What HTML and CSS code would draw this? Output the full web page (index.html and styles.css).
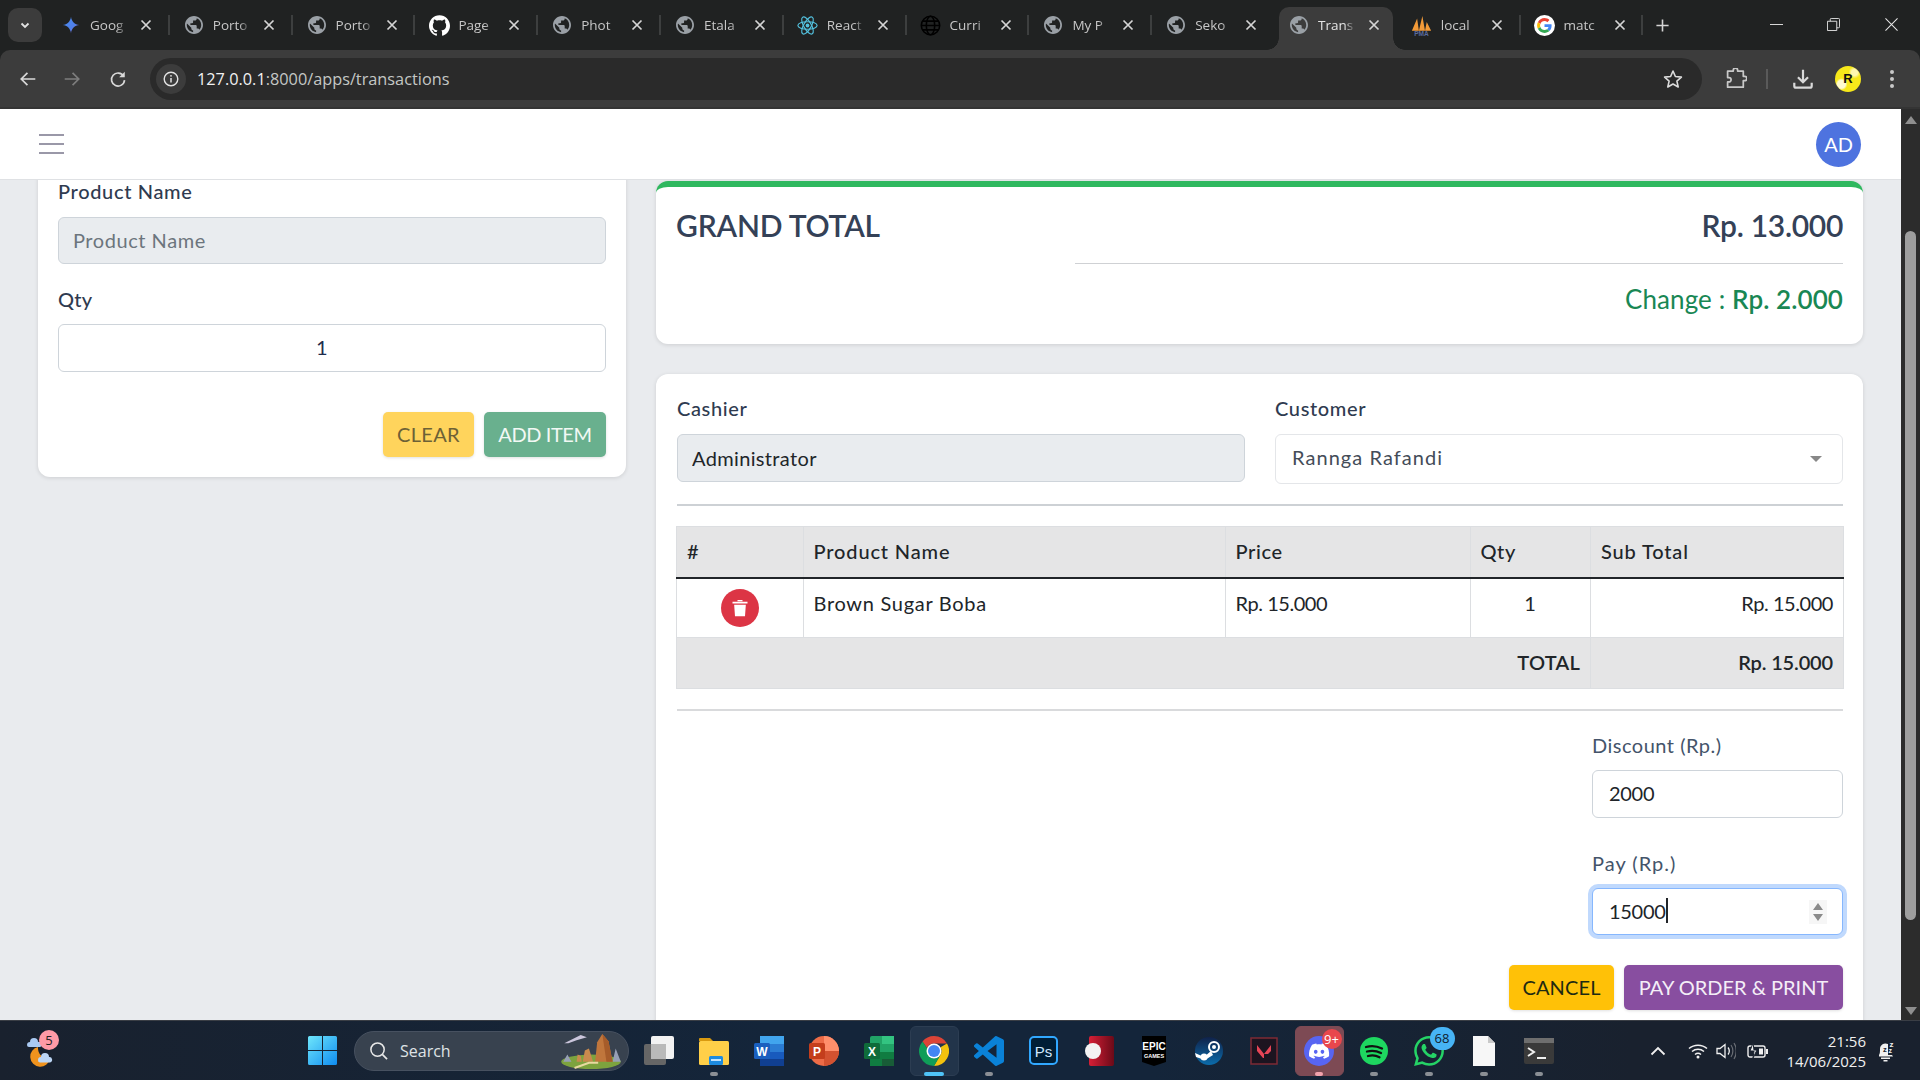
FILE: index.html
```html
<!DOCTYPE html>
<html lang="en">
<head>
<meta charset="utf-8">
<title>Transactions</title>
<link rel="stylesheet" href="styles.css">
</head>
<body>
<svg class="defs" aria-hidden="true">
  <defs>
    <linearGradient id="gem" x1="0" y1="0" x2="1" y2="1"><stop offset="0" stop-color="#4a90f5"/><stop offset=".6" stop-color="#4f7fe8"/><stop offset="1" stop-color="#a574dc"/></linearGradient>
    <linearGradient id="win" x1="0" y1="0" x2="1" y2="1"><stop offset="0" stop-color="#6fe6fb"/><stop offset="1" stop-color="#0f8cf0"/></linearGradient>
    <linearGradient id="red" x1="0" y1="0" x2="1" y2="0"><stop offset="0" stop-color="#d61f36"/><stop offset="1" stop-color="#6b0a18"/></linearGradient>
    <linearGradient id="steam" x1="0" y1="0" x2="0" y2="1"><stop offset="0" stop-color="#10224a"/><stop offset="1" stop-color="#0b6cab"/></linearGradient>
    <symbol id="gemini" viewBox="0 0 24 24"><path fill="url(#gem)" d="M12 1c.6 6 5 10.400 11 11-6 .6-10.400 5-11 11-.6-6-5-10.400-11-11 6-.6 10.400-5 11-11z"/></symbol>
    <symbol id="globe" viewBox="2 2 20 20"><path fill="#9aa0a6" d="M12 2C6.480 2 2 6.480 2 12s4.480 10 10 10 10-4.480 10-10S17.520 2 12 2zm-1 17.930c-3.950-.490-7-3.850-7-7.930 0-.620.080-1.210.210-1.790L9 15v1c0 1.100.900 2 2 2v1.930zm6.900-2.540c-.260-.810-1-1.390-1.900-1.390h-1v-3c0-.550-.450-1-1-1H8v-2h2c.550 0 1-.450 1-1V7h2c1.100 0 2-.900 2-2v-.410c2.930 1.190 5 4.060 5 7.410 0 2.080-.800 3.970-2.100 5.390z"/></symbol>
    <symbol id="github" viewBox="0 0 24 24"><path fill="#fff" d="M12 .297c-6.630 0-12 5.373-12 12 0 5.303 3.438 9.800 8.205 11.385.600.113.820-.258.820-.577 0-.285-.010-1.040-.015-2.040-3.338.724-4.042-1.610-4.042-1.610C4.422 18.070 3.633 17.700 3.633 17.700c-1.087-.744.084-.729.084-.729 1.205.084 1.838 1.236 1.838 1.236 1.070 1.835 2.809 1.305 3.495.998.108-.776.417-1.305.760-1.605-2.665-.300-5.466-1.332-5.466-5.930 0-1.310.465-2.380 1.235-3.220-.135-.303-.540-1.523.105-3.176 0 0 1.005-.322 3.300 1.230.960-.267 1.980-.399 3-.405 1.020.006 2.040.138 3 .405 2.280-1.552 3.285-1.230 3.285-1.230.645 1.653.240 2.873.120 3.176.765.840 1.230 1.910 1.230 3.220 0 4.610-2.805 5.625-5.475 5.920.420.360.810 1.096.810 2.220 0 1.606-.015 2.896-.015 3.286 0 .315.210.690.825.570C20.565 22.092 24 17.592 24 12.297c0-6.627-5.373-12-12-12"/></symbol>
    <symbol id="react" viewBox="0 0 24 24"><g fill="none" stroke="#53c1de" stroke-width="1.300"><ellipse cx="12" cy="12" rx="11" ry="4.300"/><ellipse cx="12" cy="12" rx="11" ry="4.300" transform="rotate(60 12 12)"/><ellipse cx="12" cy="12" rx="11" ry="4.300" transform="rotate(120 12 12)"/></g><circle cx="12" cy="12" r="2.200" fill="#53c1de"/></symbol>
    <symbol id="wire" viewBox="0 0 24 24"><g fill="none" stroke="#000" stroke-width="1.800"><circle cx="12" cy="12" r="10.500"/><ellipse cx="12" cy="12" rx="4.800" ry="10.500"/><path d="M1.500 12h21M3 7h18M3 17h18"/></g></symbol>
    <symbol id="pma" viewBox="0 0 24 24"><path fill="#f29a38" d="M1 18 7 4l2 14zM9 18 13 1l3 17zM16 18l2-10 5 10z"/><text x="12" y="23.500" text-anchor="middle" font-family="Liberation Sans" font-size="7.500" font-weight="700" fill="#5a6b9e">PMA</text></symbol>
    <symbol id="google" viewBox="-10 -10 68 68"><circle cx="24" cy="24" r="34" fill="#fff"/><path fill="#EA4335" d="M24 9.500c3.540 0 6.710 1.220 9.210 3.600l6.850-6.850C35.900 2.380 30.470 0 24 0 14.620 0 6.510 5.380 2.560 13.220l7.980 6.190C12.430 13.720 17.740 9.500 24 9.500z"/><path fill="#4285F4" d="M46.980 24.550c0-1.570-.150-3.090-.380-4.550H24v9.020h12.940c-.580 2.960-2.260 5.480-4.780 7.180l7.730 6c4.510-4.180 7.090-10.360 7.090-17.650z"/><path fill="#FBBC05" d="M10.530 28.590c-.480-1.450-.760-2.990-.760-4.590s.270-3.140.760-4.590l-7.980-6.190C.920 16.460 0 20.120 0 24c0 3.880.920 7.540 2.560 10.780l7.970-6.190z"/><path fill="#34A853" d="M24 48c6.480 0 11.930-2.130 15.890-5.810l-7.730-6c-2.150 1.450-4.920 2.300-8.160 2.300-6.260 0-11.570-4.220-13.470-9.910l-7.980 6.190C6.510 42.620 14.620 48 24 48z"/></symbol>
    <symbol id="close" viewBox="0 0 16 16"><path d="M3.500 3.500l9 9M12.500 3.500l-9 9" stroke="#d5d5d5" stroke-width="1.700" fill="none"/></symbol>
    <symbol id="trash" viewBox="0 0 24 24"><path fill="#fff" d="M3 4.500h18v2.200H3zM9 2.500h6v1.500H9zM5 8h14l-1 14H6z"/></symbol>
  </defs>
</svg>

<header class="tabstrip">
  <div class="tab-menu"><svg viewBox="0 0 12 12" class="chev"><path d="M2.500 4.500 6 8l3.500-3.500" fill="none" stroke="#e3e3e3" stroke-width="1.800"/></svg></div>
  <div class="tabs">
    <div class="tab"><svg class="fav"><use href="#gemini"/></svg><span class="tab-title">Goog</span><svg class="tab-x"><use href="#close"/></svg></div><i class="sep"></i>
    <div class="tab"><svg class="fav"><use href="#globe"/></svg><span class="tab-title">Porto</span><svg class="tab-x"><use href="#close"/></svg></div><i class="sep"></i>
    <div class="tab"><svg class="fav"><use href="#globe"/></svg><span class="tab-title">Porto</span><svg class="tab-x"><use href="#close"/></svg></div><i class="sep"></i>
    <div class="tab"><svg class="fav fav-lg"><use href="#github"/></svg><span class="tab-title">Page</span><svg class="tab-x"><use href="#close"/></svg></div><i class="sep"></i>
    <div class="tab"><svg class="fav"><use href="#globe"/></svg><span class="tab-title">Phot</span><svg class="tab-x"><use href="#close"/></svg></div><i class="sep"></i>
    <div class="tab"><svg class="fav"><use href="#globe"/></svg><span class="tab-title">Etala</span><svg class="tab-x"><use href="#close"/></svg></div><i class="sep"></i>
    <div class="tab"><svg class="fav fav-lg"><use href="#react"/></svg><span class="tab-title">React</span><svg class="tab-x"><use href="#close"/></svg></div><i class="sep"></i>
    <div class="tab"><svg class="fav fav-lg"><use href="#wire"/></svg><span class="tab-title">Curri</span><svg class="tab-x"><use href="#close"/></svg></div><i class="sep"></i>
    <div class="tab"><svg class="fav"><use href="#globe"/></svg><span class="tab-title">My P</span><svg class="tab-x"><use href="#close"/></svg></div><i class="sep"></i>
    <div class="tab"><svg class="fav"><use href="#globe"/></svg><span class="tab-title">Seko</span><svg class="tab-x"><use href="#close"/></svg></div><i class="sep sep-off"></i>
    <div class="tab tab-active"><svg class="fav"><use href="#globe"/></svg><span class="tab-title">Trans</span><svg class="tab-x"><use href="#close"/></svg></div><i class="sep sep-off"></i>
    <div class="tab"><svg class="fav fav-lg"><use href="#pma"/></svg><span class="tab-title">local</span><svg class="tab-x"><use href="#close"/></svg></div><i class="sep"></i>
    <div class="tab"><svg class="fav fav-lg"><use href="#google"/></svg><span class="tab-title">matc</span><svg class="tab-x"><use href="#close"/></svg></div><i class="sep"></i>
  </div>
  <svg class="newtab" viewBox="0 0 16 16"><path d="M8 1.500v13M1.500 8h13" stroke="#d5d5d5" stroke-width="1.700"/></svg>
  <div class="winctl">
    <div class="winbtn"><svg viewBox="0 0 14 14"><path d="M0 7h14" stroke="#e6e6e6" stroke-width="1"/></svg></div>
    <div class="winbtn"><svg viewBox="0 0 14 14"><path d="M.5 3.500h10v10H.5zM3.500 3.500V1.500a1 1 0 0 1 1-1h8a1 1 0 0 1 1 1v8a1 1 0 0 1-1 1h-2" fill="none" stroke="#e6e6e6"/></svg></div>
    <div class="winbtn"><svg viewBox="0 0 14 14"><path d="M.5.500l13 13M13.500.500l-13 13" stroke="#e6e6e6" stroke-width="1.100"/></svg></div>
  </div>
</header>

<nav class="toolbar">
  <svg class="tb-nav" viewBox="0 0 16 16"><path d="M14.500 8H2M7.500 2.500 2 8l5.500 5.500" fill="none" stroke="#d9d9d9" stroke-width="1.500"/></svg>
  <svg class="tb-nav" viewBox="0 0 16 16"><path d="M1.500 8H14M8.500 2.500 14 8l-5.500 5.500" fill="none" stroke="#7d7d7d" stroke-width="1.500"/></svg>
  <svg class="tb-nav tb-reload" viewBox="0 0 16 16"><path d="M13 5.500A5.800 5.800 0 1 0 13.800 9" fill="none" stroke="#d9d9d9" stroke-width="1.500"/><path d="M14 1.500V6.500H9z" fill="#d9d9d9"/></svg>
  <div class="omnibox">
    <span class="site-info"><svg viewBox="0 0 16 16"><circle cx="8" cy="8" r="6.800" fill="none" stroke="#e3e3e3" stroke-width="1.400"/><path d="M8 7v4.500" stroke="#e3e3e3" stroke-width="1.500"/><circle cx="8" cy="4.800" r=".9" fill="#e3e3e3"/></svg></span>
    <span class="url"><b>127.0.0.1</b>:8000/apps/transactions</span>
    <svg class="star" viewBox="0 0 20 20"><path d="M10 2l2.400 5.500 6 .6-4.500 4 1.300 5.900L10 15l-5.200 3 1.300-5.900-4.500-4 6-.6z" fill="none" stroke="#dcdcdc" stroke-width="1.600" stroke-linejoin="round"/></svg>
  </div>
  <svg class="tb-puzzle" viewBox="0 0 24 24"><path d="M3 3h6.500V2a2.500 2.500 0 0 1 5 0v1H21v6h1.500a2.500 2.500 0 0 1 0 5H21v7.500H3v-6h1.500a2.500 2.500 0 0 0 0-5H3z" transform="translate(0 .5) scale(.95)" fill="none" stroke="#c8c8c8" stroke-width="2" stroke-linejoin="round"/></svg>
  <i class="tb-sep"></i>
  <svg class="tb-dl" viewBox="0 0 24 24"><path d="M12 2v13M6.500 10l5.500 5.500L17.500 10" fill="none" stroke="#d9d9d9" stroke-width="2.400"/><path d="M2.500 16v3.500a2 2 0 0 0 2 2h15a2 2 0 0 0 2-2V16" fill="none" stroke="#d9d9d9" stroke-width="2.400"/></svg>
  <span class="profile">R</span>
  <svg class="tb-dots" viewBox="0 0 4 20"><circle cx="2" cy="3" r="2" fill="#c8c8c8"/><circle cx="2" cy="10" r="2" fill="#c8c8c8"/><circle cx="2" cy="17" r="2" fill="#c8c8c8"/></svg>
</nav>

<div class="viewport">
  <div class="page">
    <div class="navbar">
      <div class="burger"><i></i><i></i><i></i></div>
      <div class="avatar">AD</div>
    </div>
    <main class="content">
      <section class="card form-card">
        <div class="label strong">Product Name</div>
        <input class="input input-disabled" placeholder="Product Name" disabled>
        <div class="label strong label-next">Qty</div>
        <input class="input input-qty" value="1" readonly>
        <div class="actions actions-form">
          <button class="btn btn-clear">CLEAR</button>
          <button class="btn btn-add">ADD ITEM</button>
        </div>
      </section>

      <div class="right-col">
        <section class="card total-card">
          <div class="total-row">
            <h2 class="total-title">GRAND TOTAL</h2>
            <div class="total-amount">Rp. 13.000</div>
          </div>
          <hr class="total-hr">
          <div class="change">Change : <strong>Rp. 2.000</strong></div>
        </section>

        <section class="card order-card">
          <div class="who">
            <div class="who-cashier">
              <div class="label strong">Cashier</div>
              <input class="input input-disabled input-cashier" value="Administrator" disabled>
            </div>
            <div class="who-customer">
              <div class="label strong">Customer</div>
              <div class="select">Rannga Rafandi<i class="select-arrow"></i></div>
            </div>
          </div>
          <hr class="rule-thick">
          <table class="items">
            <colgroup><col class="c1"><col class="c2"><col class="c3"><col class="c4"><col class="c5"></colgroup>
            <thead>
              <tr><th>#</th><th>Product Name</th><th class="th-tight">Price</th><th class="th-tight">Qty</th><th>Sub Total</th></tr>
            </thead>
            <tbody>
              <tr>
                <td class="center cell-del"><button class="del"><svg viewBox="0 0 24 24"><use href="#trash"/></svg></button></td>
                <td class="name">Brown Sugar Boba</td>
                <td class="num">Rp. 15.000</td>
                <td class="center">1</td>
                <td class="right num">Rp. 15.000</td>
              </tr>
            </tbody>
            <tfoot>
              <tr><td colspan="4" class="right">TOTAL</td><td class="right num-bold">Rp. 15.000</td></tr>
            </tfoot>
          </table>
          <hr class="rule-thin">
          <div class="pay-col">
            <div class="label">Discount (Rp.)</div>
            <input class="input input-num" value="2000" readonly>
            <div class="label label-pay">Pay (Rp.)</div>
            <div class="input input-focus input-num">15000<i class="caret"></i>
              <svg class="spin" viewBox="0 0 18 24"><rect width="18" height="24" fill="#f6f6f6"/><path d="M9 3l5 7H4zM9 21l5-7H4z" fill="#8a8a8a"/></svg>
            </div>
          </div>
          <div class="actions actions-pay">
            <button class="btn btn-cancel">CANCEL</button>
            <button class="btn btn-pay">PAY ORDER &amp; PRINT</button>
          </div>
        </section>
      </div>
    </main>
  </div>
  <aside class="scrollbar">
    <svg class="sb-arrow" viewBox="0 0 12 8"><path d="M6 0l6 8H0z" fill="#8f8f8f"/></svg>
    <div class="sb-thumb"></div>
    <svg class="sb-arrow" viewBox="0 0 12 8"><path d="M6 8l6-8H0z" fill="#8f8f8f"/></svg>
  </aside>
</div>

<footer class="taskbar">
  <div class="weather">
    <svg viewBox="0 0 32 32"><path d="M15 13a10 10 0 1 0 12 12A11 11 0 0 1 15 13z" transform="translate(-3 -1)" fill="#f0931e"/><path d="M1 10a3 3 0 0 1 3-3 4 4 0 0 1 8 0 2.500 2.500 0 0 1 2 5H3a2 2 0 0 1-2-2z" fill="#a9c9f2"/><path d="M12 25a3 3 0 0 1 3-3 4 4 0 0 1 8 0 2.800 2.800 0 0 1 1 5.500H14a2.200 2.200 0 0 1-2-2.500z" fill="#bcd6f5"/></svg>
    <span class="weather-badge">5</span>
  </div>
  <svg class="winlogo" viewBox="0 0 29 29"><path fill="url(#win)" d="M0 1.500A1.500 1.500 0 0 1 1.500 0H14v14H0zM15 0h12.500A1.500 1.500 0 0 1 29 1.500V14H15zM0 15h14v14H1.500A1.500 1.500 0 0 1 0 27.500zM15 15h14v12.500a1.500 1.500 0 0 1-1.500 1.500H15z"/></svg>
  <div class="search">
    <svg class="search-q" viewBox="0 0 20 20"><circle cx="9" cy="9" r="7" fill="none" stroke="#e8e8e8" stroke-width="1.600"/><path d="M14 14l5 5" stroke="#e8e8e8" stroke-width="1.800"/></svg>
    <span class="search-text">Search</span>
    <svg class="search-art" viewBox="0 0 60 36"><ellipse cx="30" cy="29" rx="29" ry="7" fill="#7da33e"/><path d="M51 29 54 16l5 13zM3 29l4-7 4 7z" fill="#97a0b5"/><path d="M34 29 36 10l5-8 6 7 4 20z" fill="#c0763c"/><path d="M41 2l6 7 4 20h-6z" fill="#a65c2a"/><path d="M22 29l2-11 4-2 4 13zM16 29l1-7 3 1 1 6z" fill="#c98a4e"/><path d="M4 11 20 3l6 2-10 3-8 3z" fill="#cbc6dc"/><path d="M14 35l14-5h9" stroke="#e8d9a0" stroke-width="2" fill="none"/></svg>
  </div>
  <div class="dock">
    <div class="dock-item"><svg class="ic" viewBox="0 0 30 30"><rect x="0" y="8" width="22" height="21" rx="2" fill="#666"/><rect x="7" y="0" width="23" height="23" rx="2" fill="#f2f2f2"/><rect x="7" y="8" width="15" height="15" fill="#b9b9b9"/></svg></div>
    <div class="dock-item"><svg class="ic" viewBox="0 0 30 30"><path d="M0 3a1 1 0 0 1 1-1h10l3 3h-14z" fill="#d99a10"/><rect y="5" width="30" height="24" rx="1.500" fill="#ffcf48"/><rect x="10" y="20" width="14" height="9" rx="1.500" fill="#1d8be0"/><rect x="12" y="23" width="10" height="2" fill="#bfe3ff"/></svg><i class="pill"></i></div>
    <div class="dock-item"><svg class="ic" viewBox="0 0 30 30"><rect x="6" width="24" height="30" rx="2" fill="#2b7cd3"/><rect x="6" width="24" height="8" fill="#41a5ee"/><rect x="6" y="16" width="24" height="7" fill="#185abd"/><rect x="6" y="23" width="24" height="7" fill="#103f91"/><rect y="7" width="16" height="16" rx="1.500" fill="#1a5fbf"/><text x="8" y="19.500" text-anchor="middle" font-family="Liberation Sans" font-size="12" font-weight="700" fill="#fff">W</text></svg></div>
    <div class="dock-item"><svg class="ic" viewBox="0 0 30 30"><circle cx="15" cy="15" r="15" fill="#ed6c47"/><path d="M15 0a15 15 0 0 1 15 15H15z" fill="#ff8f6b"/><path d="M15 15h15a15 15 0 0 1-15 15z" fill="#d35230"/><rect y="7" width="16" height="16" rx="1.500" fill="#c43e1c"/><text x="8" y="19.500" text-anchor="middle" font-family="Liberation Sans" font-size="12" font-weight="700" fill="#fff">P</text></svg></div>
    <div class="dock-item"><svg class="ic" viewBox="0 0 30 30"><rect x="6" width="24" height="30" rx="2" fill="#21a366"/><rect x="18" width="12" height="8" fill="#33c481"/><rect x="6" y="16" width="24" height="14" fill="#107c41"/><rect x="18" y="23" width="12" height="7" fill="#185c37"/><rect y="7" width="16" height="16" rx="1.500" fill="#0f6b3a"/><text x="8" y="19.500" text-anchor="middle" font-family="Liberation Sans" font-size="12" font-weight="700" fill="#fff">X</text></svg></div>
    <div class="dock-item dock-active"><svg class="ic" viewBox="0 0 30 30"><path d="M15 0a15 15 0 0 1 13 7.500H15A7.500 7.500 0 0 0 8 12L3.500 5.500A15 15 0 0 1 15 0z" fill="#db4437"/><path d="M28 7.500A15 15 0 0 1 15 30l6.500-11.250A7.500 7.500 0 0 0 21.500 11.250z" fill="#f4c20d"/><path d="M3.500 5.500 8 12l1 7a7.500 7.500 0 0 0 12.500 0L15 30A15 15 0 0 1 3.500 5.500z" fill="#0f9d58"/><circle cx="15" cy="15" r="7.500" fill="#fff"/><circle cx="15" cy="15" r="6" fill="#4285f4"/></svg><i class="pill pill-blue"></i></div>
    <div class="dock-item"><svg class="ic" viewBox="0 0 24 24"><path fill="#0a82d8" d="M23.150 2.587 18.210.21a1.494 1.494 0 0 0-1.705.29l-9.460 8.630-4.120-3.128a.999.999 0 0 0-1.276.057L.327 7.261A1 1 0 0 0 .326 8.740L3.899 12 .326 15.260a1 1 0 0 0 .001 1.479L1.650 17.940a.999.999 0 0 0 1.276.057l4.120-3.128 9.460 8.630a1.492 1.492 0 0 0 1.704.29l4.942-2.377A1.500 1.500 0 0 0 24 20.060V3.939a1.500 1.500 0 0 0-.850-1.352zm-5.146 14.861L10.826 12l7.178-5.448v10.896z"/></svg><i class="pill"></i></div>
    <div class="dock-item"><svg class="ic" viewBox="0 0 30 30"><rect x="1" y="1" width="27" height="27" rx="4" fill="#001e36" stroke="#31a8ff" stroke-width="2"/><text x="14.500" y="21" text-anchor="middle" font-family="Liberation Sans" font-size="15" fill="#cfe9ff">Ps</text></svg></div>
    <div class="dock-item"><svg class="ic" viewBox="0 0 30 30"><rect x="5" width="25" height="30" rx="2" fill="url(#red)"/><circle cx="9" cy="15" r="8" fill="#f3f3f3"/></svg></div>
    <div class="dock-item"><svg class="ic" viewBox="0 0 26 30"><path d="M1 0h24v26l-12 4-12-4z" fill="#000"/><text x="13" y="14" text-anchor="middle" font-family="Liberation Sans" font-size="10" font-weight="700" fill="#fff">EPIC</text><text x="13" y="22" text-anchor="middle" font-family="Liberation Sans" font-size="5.500" font-weight="700" fill="#fff">GAMES</text></svg></div>
    <div class="dock-item"><svg class="ic" viewBox="0 0 30 30"><circle cx="15" cy="15" r="14" fill="url(#steam)"/><circle cx="20" cy="11" r="5" fill="none" stroke="#fff" stroke-width="2"/><circle cx="20" cy="11" r="2" fill="#fff"/><path d="M1 17l9 4 7-6 2 4-8 5-9-3z" fill="#fff"/><circle cx="10" cy="21" r="3.500" fill="#fff"/></svg></div>
    <div class="dock-item"><svg class="ic" viewBox="0 0 30 30"><rect x="2" y="2" width="26" height="26" fill="#1c1420" stroke="#7d2a35" stroke-width="1.500"/><path d="M8 9l7 9v4h-1L8 15zM22 9v6l-3 3h-4z" fill="#e74557"/></svg></div>
    <div class="dock-item dock-discord"><svg class="ic" viewBox="0 0 30 30"><circle cx="15" cy="15" r="15" fill="#5865f2"/><g transform="translate(5 5) scale(.84)"><path fill="#fff" d="M20.317 4.370a19.790 19.790 0 0 0-4.885-1.515.074.074 0 0 0-.079.037c-.211.375-.445.865-.608 1.250-1.845-.276-3.680-.276-5.487 0-.164-.393-.406-.874-.618-1.250a.077.077 0 0 0-.079-.037 19.736 19.736 0 0 0-4.885 1.515.070.070 0 0 0-.032.028C.533 9.046-.319 13.580.099 18.058a.082.082 0 0 0 .031.056c2.053 1.508 4.041 2.423 5.993 3.029a.078.078 0 0 0 .084-.028c.462-.630.873-1.295 1.226-1.994a.076.076 0 0 0-.042-.106c-.653-.248-1.274-.549-1.872-.892a.077.077 0 0 1-.008-.128c.126-.094.252-.192.372-.291a.074.074 0 0 1 .078-.011c3.928 1.793 8.180 1.793 12.061 0a.074.074 0 0 1 .079.010c.120.099.246.198.373.292a.077.077 0 0 1-.007.128 12.299 12.299 0 0 1-1.873.891.077.077 0 0 0-.041.107c.360.698.772 1.363 1.225 1.993a.076.076 0 0 0 .084.029c1.961-.607 3.950-1.522 6.002-3.029a.077.077 0 0 0 .031-.055c.501-5.177-.838-9.674-3.548-13.660a.061.061 0 0 0-.031-.029zM8.020 15.331c-1.183 0-2.157-1.086-2.157-2.419s.956-2.419 2.157-2.419c1.211 0 2.176 1.095 2.157 2.419 0 1.333-.956 2.419-2.157 2.419zm7.975 0c-1.183 0-2.157-1.086-2.157-2.419s.955-2.419 2.157-2.419c1.211 0 2.176 1.095 2.157 2.419 0 1.333-.946 2.419-2.157 2.419z"/></g></svg><span class="dock-badge badge-red">9+</span><i class="pill pill-pink"></i></div>
    <div class="dock-item"><svg class="ic" viewBox="0 0 30 30"><circle cx="15" cy="15" r="14" fill="#1ed760"/><path d="M7 11c5-1.500 11-1 16 1.500M8 15.500c4.500-1.200 9.500-.8 14 1.500M9 20c3.500-1 8-.7 11.500 1.200" fill="none" stroke="#111" stroke-width="2.300" stroke-linecap="round"/></svg><i class="pill"></i></div>
    <div class="dock-item"><svg class="ic" viewBox="0 0 24 24"><path fill="#25d366" d="M17.472 14.382c-.297-.149-1.758-.867-2.030-.967-.273-.099-.471-.148-.670.150-.197.297-.767.966-.940 1.164-.173.199-.347.223-.644.075-.297-.150-1.255-.463-2.390-1.475-.883-.788-1.480-1.761-1.653-2.059-.173-.297-.018-.458.130-.606.134-.133.298-.347.446-.520.149-.174.198-.298.298-.497.099-.198.050-.371-.025-.520-.075-.149-.669-1.612-.916-2.207-.242-.579-.487-.500-.669-.510-.173-.008-.371-.010-.570-.010-.198 0-.520.074-.792.372-.272.297-1.040 1.016-1.040 2.479 0 1.462 1.065 2.875 1.213 3.074.149.198 2.096 3.200 5.077 4.487.709.306 1.262.489 1.694.625.712.227 1.360.195 1.871.118.571-.085 1.758-.719 2.006-1.413.248-.694.248-1.289.173-1.413-.074-.124-.272-.198-.570-.347m-5.421 7.403h-.004a9.870 9.870 0 0 1-5.031-1.378l-.361-.214-3.741.982.998-3.648-.235-.374a9.860 9.860 0 0 1-1.510-5.260c.001-5.450 4.436-9.884 9.888-9.884 2.640 0 5.122 1.030 6.988 2.898a9.825 9.825 0 0 1 2.893 6.994c-.003 5.450-4.437 9.884-9.885 9.884m8.413-18.297A11.815 11.815 0 0 0 12.050 0C5.495 0 .160 5.335.157 11.892c0 2.096.547 4.142 1.588 5.945L.057 24l6.305-1.654a11.882 11.882 0 0 0 5.683 1.448h.005c6.554 0 11.890-5.335 11.893-11.893a11.821 11.821 0 0 0-3.480-8.413Z"/></svg><span class="dock-badge badge-blue">68</span><i class="pill"></i></div>
    <div class="dock-item"><svg class="ic" viewBox="0 0 24 30"><path d="M1 0h15l7 7v23H1z" fill="#f7f7f7"/><path d="M16 0l7 7h-7z" fill="#c9c9c9"/></svg><i class="pill"></i></div>
    <div class="dock-item"><svg class="ic" viewBox="0 0 30 26"><rect width="30" height="26" rx="2" fill="#3a3a3a"/><rect width="30" height="5" fill="#6e6e6e"/><path d="M4 10l6 4-6 4" fill="none" stroke="#f0f0f0" stroke-width="2"/><path d="M13 20h9" stroke="#f0f0f0" stroke-width="2"/></svg><i class="pill"></i></div>
  </div>
  <svg class="tray-chev" viewBox="0 0 16 10"><path d="M1.500 8.500 8 2l6.500 6.500" fill="none" stroke="#f0f0f0" stroke-width="1.800"/></svg>
  <svg class="tray-wifi" viewBox="0 0 20 16"><path d="M1 5.500c5-4.500 13-4.500 18 0M4 8.500c3.500-3 8.500-3 12 0M7 11.500c1.800-1.500 4.200-1.500 6 0" fill="none" stroke="#f0f0f0" stroke-width="1.500"/><circle cx="10" cy="14" r="1.500" fill="#f0f0f0"/></svg>
  <svg class="tray-vol" viewBox="0 0 20 18"><path d="M1 6.500h3L9 2.500v13l-5-4H1z" fill="none" stroke="#f0f0f0" stroke-width="1.300"/><path d="M12 5.500c1.500 2 1.500 5 0 7" fill="none" stroke="#f0f0f0" stroke-width="1.300"/><path d="M15 3c2.500 3.500 2.500 8.500 0 12M18 1c3 4.500 3 11.500 0 16" fill="none" stroke="#6a6e75" stroke-width="1.200"/></svg>
  <svg class="tray-batt" viewBox="0 0 22 16"><rect x="1" y="3" width="17" height="11" rx="2" fill="none" stroke="#f0f0f0" stroke-width="1.400"/><rect x="19" y="6" width="2" height="5" fill="#f0f0f0"/><path d="M6 0 3 8h4l-1 7 4-8H7z" fill="#f0f0f0" stroke="#19212e"/><rect x="12" y="5.500" width="4" height="6" fill="#f0f0f0"/></svg>
  <div class="clock"><div>21:56</div><div>14/06/2025</div></div>
  <svg class="tray-bell" viewBox="0 0 20 22"><path d="M3 15c1-1.500 1-3.500 1-6a5.500 5.500 0 0 1 8-5v11h4l1 1.500H3z" fill="#f0f0f0"/><rect x="5" y="17.500" width="9" height="1.500" fill="#f0f0f0"/><path d="M7.500 20h4v1.500h-4z" fill="#f0f0f0"/><text x="13.500" y="7" font-family="Liberation Sans" font-size="8" font-weight="700" fill="#f0f0f0">z</text><text x="7" y="12" font-family="Liberation Sans" font-size="7.500" font-weight="700" fill="#19212e">z</text><text x="12.500" y="13" font-family="Liberation Sans" font-size="7" font-weight="700" fill="#f0f0f0">z</text></svg>
</footer>
</body>
</html>
```

FILE: styles.css
```css
* { box-sizing: border-box; }
html, body { height: 100%; }
body {
  margin: 0;
  display: flex;
  flex-direction: column;
  height: 100vh;
  overflow: hidden;
  background: #202222;
  font-family: "Lato", "Noto Sans", sans-serif;
  font-size: 20px;
  line-height: 30px;
  color: #212529;
}
.defs { position: absolute; width: 0; height: 0; }
i { display: block; }

/* tab strip */
.tabstrip {
  flex: none;
  height: 50px;
  display: flex;
  align-items: center;
  background: #202222;
  font-family: "Open Sans", "Noto Sans", sans-serif;
}
.tab-menu {
  width: 34px;
  height: 34px;
  margin: 0 5px 0 8px;
  background: #3c3c3c;
  border-radius: 10px;
  display: flex;
  align-items: center;
  justify-content: center;
}
.chev { width: 12px; height: 12px; }
.tabs { display: flex; align-items: center; height: 50px; }
.tab {
  position: relative;
  width: 120.8px;
  height: 50px;
  padding-left: 15px;
  display: flex;
  align-items: center;
  font-size: 13.500px;
  color: #c7c7c7;
}
.tab-active { color: #e3e3e3; }
.tab-active::before {
  content: "";
  position: absolute;
  z-index: 0;
  left: 4px;
  right: 3px;
  top: 7px;
  bottom: 0;
  background: #3c3c3c;
  border-radius: 10px 10px 0 0;
}
.tab-active::after {
  content: "";
  position: absolute;
  z-index: 0;
  left: -8px;
  right: -9px;
  bottom: 0;
  height: 12px;
  background:
    radial-gradient(circle at 0 0, #202222 11.500px, #3c3c3c 12px) left bottom / 12px 12px no-repeat,
    radial-gradient(circle at 100% 0, #202222 11.500px, #3c3c3c 12px) right bottom / 12px 12px no-repeat;
}
.fav { position: relative; z-index: 1; flex: none; width: 18px; height: 18px; }
.fav-lg { width: 21px; height: 21px; margin: 0 -1.500px; }
.tab-title {
  position: relative;
  z-index: 1;
  flex: none;
  width: 39px;
  margin-left: 10px;
  overflow: hidden;
  white-space: nowrap;
  -webkit-mask-image: linear-gradient(90deg, #000 68%, transparent 97%);
  mask-image: linear-gradient(90deg, #000 68%, transparent 97%);
}
.tab-x { position: relative; z-index: 1; flex: none; width: 16px; height: 16px; margin-left: 9px; }
.sep { flex: none; width: 2px; height: 20px; background: #3d3f3f; }
.sep-off { background: transparent; }
.newtab { flex: none; width: 15px; height: 15px; margin-left: 12px; }
.winctl { margin-left: auto; display: flex; }
.winbtn { width: 57.500px; height: 40px; display: flex; align-items: center; justify-content: center; margin-bottom: 2px; }
.winbtn svg { width: 13px; height: 13px; }

/* toolbar */
.toolbar {
  flex: none;
  height: 59px;
  padding: 1px 0 0 6px;
  display: flex;
  align-items: center;
  background: #3c3c3c;
  border-radius: 10px 10px 0 0;
  border-bottom: 2px solid #343434;
}
.tb-nav { flex: none; width: 18px; height: 18px; margin: 0 13px; }
.tb-reload { margin: 0 14px 0 15px; }
.omnibox {
  flex: none;
  width: 1552px;
  height: 42px;
  margin-left: 9px;
  border-radius: 21px;
  background: #2a2a2a;
  display: flex;
  align-items: center;
  font-family: "Open Sans", "Noto Sans", sans-serif;
}
.site-info {
  width: 30px;
  height: 30px;
  margin-left: 6px;
  border-radius: 50%;
  background: #3c3c3c;
  display: flex;
  align-items: center;
  justify-content: center;
}
.site-info svg { width: 16px; height: 16px; }
.url { margin-left: 11px; font-size: 16.300px; line-height: 22px; color: #c4c7c5; }
.url b { font-weight: 400; color: #f1f1f1; }
.star { width: 20px; height: 20px; margin-left: auto; margin-right: 19px; }
.tb-puzzle { flex: none; width: 22px; height: 22px; margin-left: 23px; }
.tb-sep { flex: none; width: 2px; height: 20px; margin-left: 19px; background: #5a5a5a; }
.tb-dl { flex: none; width: 22px; height: 22px; margin-left: 24px; }
.profile {
  flex: none;
  width: 26px;
  height: 26px;
  margin-left: 21px;
  border-radius: 50%;
  background:
    radial-gradient(circle at 25% 70%, #fffbd0 0 4px, transparent 6px),
    radial-gradient(circle at 75% 25%, #fff8b0 0 3px, transparent 6px),
    #f7e81a;
  color: #111;
  font: 700 13px/26px "Liberation Sans", sans-serif;
  text-align: center;
}
.tb-dots { flex: none; width: 4px; height: 20px; margin-left: 29px; }

/* page */
.viewport { flex: 1; min-height: 0; display: flex; }
.page { flex: 1; min-width: 0; display: flex; flex-direction: column; background: #e9ebee; }
.navbar {
  flex: none;
  height: 71px;
  padding: 0 40px 0 39px;
  background: #fff;
  border-bottom: 1px solid #dfe1e4;
  display: flex;
  align-items: center;
  justify-content: space-between;
}
.burger { width: 25px; }
.burger i { height: 2px; background: #9a98a8; margin: 7px 0; }
.avatar {
  width: 45px;
  height: 45px;
  border-radius: 50%;
  background: #4e73df;
  color: #fff;
  font-size: 20px;
  line-height: 45px;
  text-align: center;
}
.content {
  flex: 1;
  min-height: 0;
  overflow: hidden;
  padding: 1px 38px 0;
  display: grid;
  grid-template-columns: 588px 1207px;
  column-gap: 30px;
  align-items: start;
}
.card {
  background: #fff;
  border-radius: 12px;
  box-shadow: 0 1px 4px rgba(0, 0, 0, .12);
}
.form-card { margin-top: -24px; padding: 20px; }
.right-col { display: flex; flex-direction: column; gap: 30px; }
.label { color: #44546a; letter-spacing: .5px; line-height: 28px; margin-bottom: 11px; }
.strong { font-weight: 500; color: #2f3b50; margin-bottom: 12px; letter-spacing: .65px; }
.label-next { margin: 21px 0 11px; letter-spacing: .2px; }
.label-pay { letter-spacing: 1px; margin-top: 31px; }
.input {
  display: block;
  width: 100%;
  height: 48px;
  padding: 0 14px 2px;
  border: 1px solid #ced4da;
  border-radius: 6px;
  background: #fff;
  font: inherit;
  letter-spacing: .55px;
  color: #212529;
}
.input::placeholder { color: #6c757d; opacity: 1; }
.input-disabled { background: #e9ecef; color: #212529; opacity: 1; height: 47px; }
.input-cashier { height: 48px; padding-bottom: 0; letter-spacing: .35px; }
.input-qty { text-align: center; padding-right: 34px; color: #1f2d4d; }
.input-num { letter-spacing: -.3px; padding-left: 16px; }
.actions { display: flex; justify-content: flex-end; gap: 10px; }
.actions-form { margin-top: 40px; }
.btn {
  height: 45px;
  padding: 0 0 2px;
  border: 0;
  border-radius: 5px;
  font: inherit;
  white-space: nowrap;
  letter-spacing: .35px;
  box-shadow: 0 1px 3px rgba(0, 0, 0, .12);
}
.btn-clear { width: 91px; background: #ffd45c; color: #6d6136; }
.btn-add { width: 122px; background: #69b08e; color: #f2f8f4; letter-spacing: -.4px; }
.btn-cancel { width: 105px; background: #ffc107; color: #1e2a12; letter-spacing: .15px; }
.btn-pay { width: 219px; background: #884ea0; color: #f4eef7; letter-spacing: 0; }

/* grand total */
.total-card { padding: 20px 20px 26px 20px; border-top: 6px solid #2fb85f; }
.total-row { display: flex; justify-content: space-between; align-items: center; color: #344157; }
.total-title { margin: 0; font-size: 30px; line-height: 36px; font-weight: 600; letter-spacing: -.2px; color: #344157; }
.total-amount { font-size: 30px; line-height: 36px; font-weight: 600; letter-spacing: -.3px; }
.total-hr { width: 768px; margin: 20px 0 0 auto; border: 0; border-top: 1px solid #cfd1d4; }
.change { margin-top: 16px; text-align: right; font-size: 26px; line-height: 38px; color: #198754; letter-spacing: .1px; }
.change strong { font-weight: 600; }

/* order */
.order-card { padding: 20px 20px 40px 21px; }
.who { display: flex; gap: 30px; }
.who-cashier { width: 568px; flex: none; }
.who-customer { flex: 1; }
.select {
  position: relative;
  height: 50px;
  padding: 0 16px;
  border: 1px solid #e4e6e9;
  border-radius: 6px;
  line-height: 45px;
  color: #444c58;
  letter-spacing: 1.050px;
}
.select-arrow {
  position: absolute;
  right: 20px;
  top: 21px;
  border-style: solid;
  border-width: 6px 6px 0;
  border-color: #888 transparent transparent;
}
.rule-thick { margin: 20px 0 20px; border: 0; border-top: 2px solid #cdd1d5; }
.rule-thin { margin: 20px 0 20px; border: 0; border-top: 2px solid #d9dadc; }
.items { width: 1167px; table-layout: fixed; border-collapse: collapse; margin-left: -1px; }
.c1 { width: 126.500px; }
.c2 { width: 422px; }
.c3 { width: 245px; }
.c4 { width: 120.500px; }
.c5 { width: 253px; }
.items th, .items td {
  padding: 9px 10px 11px;
  border: 1px solid #dcdee1;
  vertical-align: top;
  text-align: left;
  letter-spacing: .25px;
}
.items th { background: #e5e5e6; font-weight: 500; border-bottom: 2px solid #212529; letter-spacing: .85px; }
.items th.th-tight { letter-spacing: .6px; }
.items tfoot td { background: #e5e5e6; font-weight: 600; }
.items td.center { text-align: center; }
.items td.right { text-align: right; }
.items td.name { letter-spacing: .7px; }
.items td.num { letter-spacing: -.45px; }
.items td.num-bold { letter-spacing: -.15px; }
.items td.cell-del { padding: 10px; }
.del {
  width: 38px;
  height: 38px;
  margin: 0 auto;
  padding: 0;
  border: 0;
  border-radius: 50%;
  background: #dc3545;
  display: flex;
  align-items: center;
  justify-content: center;
}
.del svg { width: 20px; height: 20px; }
.pay-col { width: 251px; margin-left: auto; }
.input-focus {
  position: relative;
  display: flex;
  align-items: center;
  height: 47px;
  border-color: #86b7fe;
  box-shadow: 0 0 0 4px #c0d9fd;
}
.caret { width: 2px; height: 25px; background: #212529; }
.spin { position: absolute; right: 15px; top: 11px; width: 18px; height: 24px; }
.actions-pay { margin-top: 30px; }

/* scrollbar */
.scrollbar {
  flex: none;
  width: 19px;
  background: #2c2c2c;
  display: flex;
  flex-direction: column;
  align-items: center;
  padding: 7px 0 5px;
}
.sb-arrow { flex: none; width: 12px; height: 8px; }
.sb-thumb { width: 11px; height: 689px; margin: 107px 0 auto; border-radius: 6px; background: #9e9e9e; }

/* taskbar */
.taskbar {
  flex: none;
  height: 60px;
  display: flex;
  align-items: center;
  border-top: 1px solid #3a3e45;
  background: linear-gradient(90deg, #19212e 0%, #14253a 40%, #14253a 60%, #19212e 85%);
  font-family: "Open Sans", "Noto Sans", sans-serif;
  color: #f0f0f0;
}
.weather { position: relative; flex: none; width: 32px; height: 32px; margin-left: 26px; }
.weather svg { width: 32px; height: 32px; display: block; }
.weather-badge {
  position: absolute;
  left: 13px;
  top: -5px;
  width: 20px;
  height: 20px;
  border-radius: 50%;
  background: #ff9aa6;
  color: #222;
  font-size: 13px;
  line-height: 20px;
  text-align: center;
}
.winlogo { flex: none; width: 29px; height: 29px; margin-left: 250px; }
.search {
  flex: none;
  width: 275px;
  height: 40px;
  margin-left: 17px;
  padding: 0 6px 0 14px;
  border-radius: 20px;
  background: #38424f;
  border: 1px solid #475160;
  display: flex;
  align-items: center;
}
.search-q { flex: none; width: 19px; height: 19px; }
.search-text { margin-left: 12px; font-size: 16px; line-height: 20px; color: #dfe2e6; }
.search-art { flex: none; width: 62px; height: 37px; margin-left: auto; }
.dock { flex: none; display: flex; margin-left: 2.500px; }
.dock-item {
  position: relative;
  width: 55px;
  height: 50px;
  display: flex;
  align-items: center;
  justify-content: center;
}
.ic { width: 30px; height: 30px; }
.dock-active::before, .dock-discord::before {
  content: "";
  position: absolute;
  top: 0;
  bottom: 0;
  left: 3px;
  right: 3px;
  border-radius: 6px;
  background: #22344a;
  border: 1px solid #2c3d52;
}
.dock-discord::before { background: #7d4a54; border-color: #7d4a54; }
.dock-item .ic { position: relative; }
.pill {
  position: absolute;
  left: 50%;
  bottom: 0;
  width: 8px;
  height: 4px;
  margin-left: -4px;
  border-radius: 2px;
  background: #8b8f95;
}
.pill-blue { width: 20px; margin-left: -10px; background: #4fc3f7; }
.pill-pink { background: #f2a3ad; }
.dock-badge {
  position: absolute;
  top: 3px;
  left: 30px;
  min-width: 20px;
  height: 20px;
  border-radius: 10px;
  font-size: 13px;
  line-height: 20px;
  text-align: center;
  color: #fff;
}
.badge-red { background: #e8474c; }
.badge-blue { left: 28px; width: 25px; height: 23px; top: 1px; line-height: 23px; font-size: 13px; color: #10202e; background: #47b4f5; border-radius: 12px; }
.tray-chev { flex: none; width: 16px; height: 10px; margin-left: 83.500px; }
.tray-wifi { flex: none; width: 20px; height: 16px; margin-left: 22px; }
.tray-vol { flex: none; width: 20px; height: 18px; margin-left: 8px; }
.tray-batt { flex: none; width: 22px; height: 16px; margin-left: 11px; }
.clock { flex: none; width: 90px; margin-left: 7px; text-align: right; font-size: 15px; line-height: 20px; }
.tray-bell { flex: none; width: 20px; height: 22px; margin-left: 10px; }
```
